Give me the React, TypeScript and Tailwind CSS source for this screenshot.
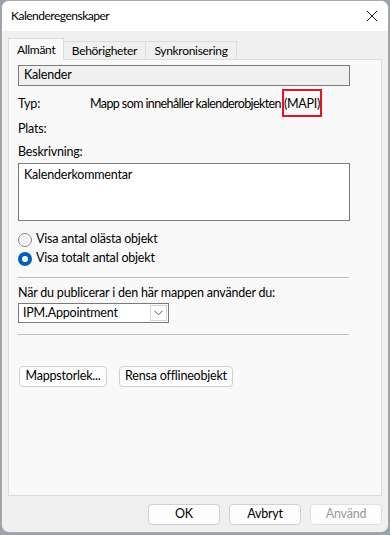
import React from 'react'

const font = { fontFamily: '"Segoe UI", Lato, "Noto Sans", sans-serif', letterSpacing: '-0.2px' }

function Radio({ checked, label }: { checked?: boolean; label: string }) {
  return (
    <div className="flex items-center gap-[4px] h-[19px]">
      {checked ? (
        <span className="w-[14px] h-[14px] rounded-full bg-[#005fb8] flex items-center justify-center">
          <span className="w-[6px] h-[6px] rounded-full bg-white" />
        </span>
      ) : (
        <span className="w-[14px] h-[14px] rounded-full border border-[#8a8a8a] bg-[#f5f5f5]" />
      )}
      <span>{label}</span>
    </div>
  )
}

function Btn({ children, className = '' }: { children: React.ReactNode; className?: string }) {
  return (
    <div
      className={
        'h-[21px] flex items-center justify-center rounded-[4px] border border-[#d0d0d0] bg-[#fdfdfd] ' +
        className
      }
    >
      {children}
    </div>
  )
}

export default function App() {
  return (
    <div className="w-[390px] h-[535px] bg-[#9aa3ac] text-[12.5px] text-black leading-none" style={font}>
      <div className="ml-[1px] w-[388px] h-[533px] rounded-[8px] border border-[#a9a9a9] bg-[#f0f0f0] overflow-hidden flex flex-col">
        {/* Title bar */}
        <div className="h-[30px] bg-white flex items-center justify-between pl-[9px] pr-[8px] shrink-0">
          <span className="text-[12px] tracking-[-0.5px]">Kalenderegenskaper</span>
          <svg width="12" height="12" viewBox="0 0 12 12" className="mr-[2px]">
            <path d="M1 1 L11 11 M11 1 L1 11" stroke="#1a1a1a" strokeWidth="1" />
          </svg>
        </div>

        {/* Tabs */}
        <div className="pl-[6px] pt-[7px] flex items-end h-[28px] shrink-0 text-[12px] tracking-[-0.3px]">
          <div className="relative z-10 h-[22px] w-[56px] bg-[#f9f9f9] border border-b-0 border-[#dcdcdc] flex items-center pl-[8px] -mb-[1px]">
            Allmänt
          </div>
          <div className="h-[18px] w-[82px] bg-[#f0f0f0] border border-l-0 border-b-0 border-[#dcdcdc] flex items-center justify-center">
            Behörigheter
          </div>
          <div className="h-[18px] w-[91px] bg-[#f0f0f0] border border-l-0 border-b-0 border-[#dcdcdc] flex items-center justify-center">
            Synkronisering
          </div>
        </div>

        {/* Panel */}
        <div className="ml-[6px] w-[374px] h-[437px] bg-[#f9f9f9] border border-[#dcdcdc] pl-[9px] pt-[5px] shrink-0">
          <div className="w-[332px] h-[21px] bg-[#f0f0f0] border border-[#7a7a7a] flex items-center pl-[5px]">
            Kalender
          </div>

          <div className="flex items-center h-[19px] mt-[9px]">
            <span className="w-[72px]">Typ:</span>
            <span className="tracking-[-0.6px]">
              Mapp som innehåller kalenderobjekten
              <span className="relative ml-[3px] tracking-[-0.3px]">
                (MAPI)
                <span className="absolute -left-[2px] -right-[2px] -top-[7px] -bottom-[6px] border-2 border-[#e81224]" />
              </span>
            </span>
          </div>

          <div className="flex items-center h-[19px] mt-[6px]">Plats:</div>

          <div className="flex items-center h-[19px] mt-[4px]">Beskrivning:</div>
          <div className="w-[332px] h-[58px] bg-white border border-[#7a7a7a] pl-[5px] pt-[5px] mt-[1px]">
            Kalenderkommentar
          </div>

          <div className="mt-[9px] flex flex-col">
            <Radio label="Visa antal olästa objekt" />
            <Radio checked label="Visa totalt antal objekt" />
          </div>

          <div className="w-[331px] h-px bg-[#bcbcbc] mt-[9px]" />

          <div className="flex items-center h-[19px] mt-[6px]">När du publicerar i den här mappen använder du:</div>
          <div className="w-[151px] h-[20px] bg-white border border-[#7a7a7a] flex items-center">
            <span className="flex-1 pl-[4px]">IPM.Appointment</span>
            <span className="w-[17px] h-[16px] mr-[1px] border border-[#d5d5d5] flex items-center justify-center">
              <svg width="9" height="6" viewBox="0 0 9 6">
                <path d="M0.5 0.8 L4.5 4.8 L8.5 0.8" stroke="#555" strokeWidth="1" fill="none" />
              </svg>
            </span>
          </div>

          <div className="w-[331px] h-px bg-[#bcbcbc] mt-[11px]" />

          <div className="flex gap-[12px] mt-[31px] ml-[1px]">
            <Btn className="w-[88px]">Mappstorlek...</Btn>
            <Btn className="w-[114px]">Rensa offlineobjekt</Btn>
          </div>
        </div>

        {/* Footer buttons */}
        <div className="flex justify-end gap-[9px] pr-[6px] pt-[8px]">
          <Btn className="w-[72px] border-[#005fb8]">OK</Btn>
          <Btn className="w-[72px]">Avbryt</Btn>
          <Btn className="w-[72px] bg-[#f5f5f5] border-[#e0e0e0] text-[#9a9a9a]">Använd</Btn>
        </div>
      </div>
    </div>
  )
}
